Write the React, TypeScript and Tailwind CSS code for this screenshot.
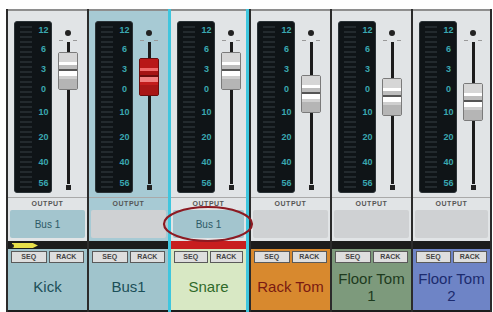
import React from 'react';

type StripData = {
    name: string[];
    panel: string;
    nameBg: string;
    nameText: string;
    output: string;
    capTop: number;
    red?: boolean;
    selected?: boolean;
    tag?: boolean;
    redBar?: boolean;
};

const strips: StripData[] = [
    { name: ['Kick'], panel: 'bg-[#e1e4e6]', nameBg: 'bg-[#9fc3cb]', nameText: 'text-[#1b4f58]', output: 'Bus 1', capTop: 41, tag: true },
    { name: ['Bus1'], panel: 'bg-[#a7cad4]', nameBg: 'bg-[#a0c4cc]', nameText: 'text-[#1b4f58]', output: '', capTop: 47, red: true },
    { name: ['Snare'], panel: 'bg-[#e1e4e6]', nameBg: 'bg-[#d8e8c4]', nameText: 'text-[#2f6a2a]', output: 'Bus 1', capTop: 41, selected: true, redBar: true },
    { name: ['Rack Tom'], panel: 'bg-[#e1e4e6]', nameBg: 'bg-[#d8892e]', nameText: 'text-[#7a1a12]', output: '', capTop: 64 },
    { name: ['Floor Tom', '1'], panel: 'bg-[#e1e4e6]', nameBg: 'bg-[#7d9a7c]', nameText: 'text-[#1d3a1e]', output: '', capTop: 67 },
    { name: ['Floor Tom', '2'], panel: 'bg-[#e1e4e6]', nameBg: 'bg-[#6e84c6]', nameText: 'text-[#1c2b6e]', output: '', capTop: 72 },
];

const scale = [
    { label: '12', h: 'h-[19px]' },
    { label: '6', h: 'h-[20px]' },
    { label: '3', h: 'h-[20px]' },
    { label: '0', h: 'h-[23px]' },
    { label: '10', h: 'h-[25px]' },
    { label: '20', h: 'h-[25px]' },
    { label: '40', h: 'h-[21px]' },
    { label: '56', h: 'h-[14px]' },
];

function Meter() {
    return (
        <div className="ml-[6px] mt-[10px] w-[38px] h-[172px] rounded-[3px] bg-[#0f1417] border border-[#2a3236] flex">
            <div className="w-[21px] pl-[5px] pt-[4px] flex flex-col gap-[3px]">
                {Array.from({ length: 33 }).map((_, i) => (
                    <div key={i} className="h-[2px] w-[12px] bg-[#232a2e]" />
                ))}
            </div>
            <div className="flex-1 flex flex-col pt-[3px] items-center">
                {scale.map((s) => (
                    <div key={s.label} className={`${s.h} text-[9px] leading-[10px] font-bold text-[#3aa7b0]`}>
                        {s.label}
                    </div>
                ))}
            </div>
        </div>
    );
}

function Fader({ top, red }: { top: number; red?: boolean }) {
    return (
        <div className="relative ml-[6px] w-[20px] flex flex-col items-center">
            <div className="mt-[19px] w-[6px] h-[6px] rounded-full bg-[#222]" />
            <div className="mt-[4px] w-full flex justify-between px-[1px]">
                <div className="w-[4px] h-px bg-[#999]" />
                <div className="w-[4px] h-px bg-[#999]" />
            </div>
            <div className="mt-[1px] w-[3px] h-[142px] bg-[#1c1c1c]" />
            <div className="mt-[1px] w-[5px] h-[5px] bg-[#222]" />
            <div
                className={`absolute left-0 w-[20px] h-[38px] rounded-[2px] border flex flex-col ${
                    red ? 'border-[#6a0c0c] bg-[#cf2222]' : 'border-[#7a7a7a] bg-[#f2f2f2]'
                }`}
                style={{ top }}
            >
                <div className={`h-[9px] ${red ? 'bg-[#b81818]' : 'bg-[#d6d6d6]'}`} />
                <div className={`h-[3px] ${red ? 'bg-[#ef6a6a]' : 'bg-white'}`} />
                <div className={`h-[4px] ${red ? 'bg-[#a51414]' : 'bg-[#bdbdbd]'}`} />
                <div className={`h-[2px] ${red ? 'bg-[#6a0c0c]' : 'bg-[#555]'}`} />
                <div className={`h-[5px] ${red ? 'bg-[#f08080]' : 'bg-white'}`} />
                <div className={`h-[3px] ${red ? 'bg-[#c21c1c]' : 'bg-[#cfcfcf]'}`} />
                <div className={`flex-1 ${red ? 'bg-[#a81616]' : 'bg-[#b5b5b5]'}`} />
            </div>
        </div>
    );
}

function Strip({ s, last }: { s: StripData; last: boolean }) {
    const side = s.selected ? 'border-[#3fc6de] border-x-[3px]' : `border-l-2 border-[#2b2b2b] ${last ? 'border-r-2' : ''}`;
    return (
        <div className={`w-[81px] h-[303px] flex flex-col shrink-0 ${side}`}>
            <div className={`h-[189px] border-t-2 border-[#8e8e8e] border-b border-b-[#a9a9a9] flex ${s.panel}`}>
                <Meter />
                <Fader top={s.capTop} red={s.red} />
            </div>
            <div className={`h-[43px] flex flex-col ${s.panel}`}>
                <div className="h-[12px] text-[7px] leading-[12px] font-bold text-center text-[#555] tracking-[0.5px]">OUTPUT</div>
                <div
                    className={`mx-[2px] h-[28px] rounded-[2px] flex items-center justify-center text-[10px] text-[#2d5a66] ${
                        s.output ? 'bg-[#a3c5ce]' : 'bg-[#cfd1d3]'
                    }`}
                >
                    {s.output}
                </div>
            </div>
            <div className={`h-[8px] relative ${s.redBar ? 'bg-[#c81e1e]' : 'bg-[#1c1c1c]'}`}>
                {s.tag && (
                    <div className="absolute left-[2px] top-[2px] flex items-center">
                        <div className="w-[4px] h-[4px] rounded-full bg-[#222] mr-[-2px] z-10" />
                        <div className="w-[26px] h-[5px] bg-[#e8e04a] [clip-path:polygon(0_0,80%_0,100%_50%,80%_100%,0_100%)]" />
                    </div>
                )}
            </div>
            <div className={`flex-1 flex flex-col ${s.nameBg}`}>
                <div className="flex gap-[2px] px-[3px] pt-[2px]">
                    <div className="flex-1 h-[12px] border border-[#5a5a5a] bg-[#dedede] text-[7px] leading-[10px] font-bold text-center text-[#444]">SEQ</div>
                    <div className="flex-1 h-[12px] border border-[#5a5a5a] bg-[#dedede] text-[7px] leading-[10px] font-bold text-center text-[#444]">RACK</div>
                </div>
                <div className={`flex-1 flex flex-col items-center justify-center text-[15px] leading-[17px] ${s.nameText}`}>
                    {s.name.map((n) => (
                        <div key={n}>{n}</div>
                    ))}
                </div>
            </div>
            <div className="h-[2px] bg-[#1c1c1c]" />
        </div>
    );
}

export default function App() {
    return (
        <div className="relative w-[493px] h-[312px] bg-white overflow-hidden font-['Liberation_Sans',sans-serif]">
            <div className="flex pt-[9px] pl-[6px]">
                {strips.map((s, i) => (
                    <Strip key={i} s={s} last={i === strips.length - 1} />
                ))}
            </div>
            <svg className="absolute left-[162px] top-[205px]" width="92" height="38" viewBox="0 0 92 38">
                <ellipse cx="46" cy="19" rx="44" ry="17" fill="none" stroke="#8c1a22" strokeWidth="2.2" />
            </svg>
        </div>
    );
}
